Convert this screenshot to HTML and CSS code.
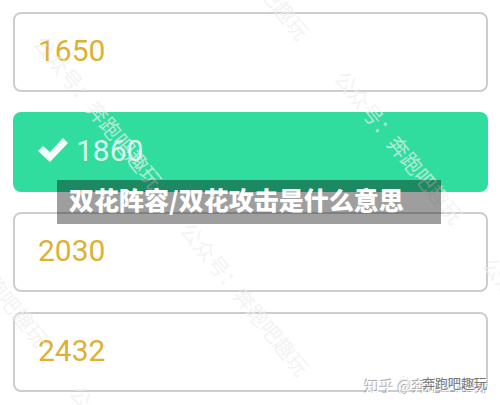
FILE: index.html
```
<!DOCTYPE html>
<html lang="zh-CN">
<head>
    <meta charset="UTF-8">
    <meta name="viewport" content="width=device-width, initial-scale=1.0">
    <title>双花阵容/双花攻击是什么意思</title>
    <link rel="stylesheet" href="styles.css">
</head>
<body>
    <main class="quiz">
        <div class="options">
            <button type="button" class="option">1650</button>
            <button type="button" class="option selected" aria-pressed="true">
                <svg class="check" viewBox="0 0 30 24" aria-hidden="true">
                    <path d="M0 13 L5 8 L12 14 L25 0 L30 5 L12 24 Z"/>
                </svg>
                1860
            </button>
            <button type="button" class="option">2030</button>
            <button type="button" class="option">2432</button>
        </div>

        <!-- repeated diagonal watermark -->
        <div class="marks" aria-hidden="true">
            <span class="mark mark-1">公众号：奔跑吧趣玩</span>
            <span class="mark mark-2">公众号：奔跑吧趣玩</span>
            <span class="mark mark-3">公众号：奔跑吧趣玩</span>
            <span class="mark mark-4">公众号：奔跑吧趣玩</span>
            <span class="mark mark-5">公众号：奔跑吧趣玩</span>
            <span class="mark mark-6">公众号：奔跑吧趣玩</span>
            <span class="mark mark-7">公众号：奔跑吧趣玩</span>
        </div>

        <h1 class="banner">双花阵容/双花攻击是什么意思</h1>

        <div class="credit credit-site">知乎 @奔跑吧趣玩</div>
        <div class="credit credit-account">
            <svg class="wechat" viewBox="0 0 24 18" aria-hidden="true">
                <circle cx="8" cy="7" r="6"/>
                <circle cx="16" cy="11" r="5"/>
                <path d="M5 5h2M10 5h2M14 10h1M18 10h1"/>
            </svg>
            奔跑吧趣玩
        </div>
    </main>
</body>
</html>
```
FILE: styles.css
```
body {
    margin: 0;
    background: #fff;
    font-family: Roboto, "Noto Sans CJK SC", sans-serif;
}

.quiz {
    position: relative;
    overflow: hidden;
    padding: 12px 12px 13px 13px;
}

.options {
    display: flex;
    flex-direction: column;
    gap: 20px;
}

.option {
    display: flex;
    align-items: center;
    gap: 8px;
    height: 80px;
    padding: 0 23px 4px;
    border: 2px solid #cdcdcd;
    border-radius: 8px;
    background: #fff;
    color: #dcb135;
    font-family: inherit;
    font-size: 30px;
    text-align: left;
    cursor: pointer;
}

.option.selected {
    background: #30dd9f;
    border-color: #30dd9f;
    color: #d8fbee;
}

.check {
    width: 30px;
    height: 24px;
    fill: #f4fffb;
}

.mark {
    position: absolute;
    color: rgba(238, 238, 238, 0.7);
    font-family: "Noto Sans CJK TC", "Noto Sans CJK SC", sans-serif;
    font-size: 21px;
    line-height: 24px;
    white-space: nowrap;
    transform: rotate(51deg);
    transform-origin: 0 50%;
    pointer-events: none;
}

.mark-1 {
    left: 39px;
    top: 26px;
}

.mark-2 {
    left: 340px;
    top: 61px;
}

.mark-3 {
    left: 186px;
    top: 213px;
}

.mark-4 {
    left: 186px;
    top: -123px;
}

.mark-5 {
    left: -75px;
    top: 184px;
}

.mark-6 {
    left: 75px;
    top: 376px;
}

.mark-7 {
    left: 488px;
    top: 248px;
}

.banner {
    position: absolute;
    left: 57px;
    right: 59px;
    top: 180px;
    margin: 0;
    padding: 0 12px 6px;
    background: rgba(0, 0, 0, 0.38);
    color: #fff;
    font-family: "Noto Sans CJK SC", sans-serif;
    font-size: 25px;
    font-weight: 900;
    line-height: 38px;
    white-space: nowrap;
}

.credit {
    position: absolute;
    right: 13px;
    white-space: nowrap;
    font-family: "Noto Sans CJK SC", sans-serif;
    line-height: 20px;
}

.credit-site {
    bottom: 9px;
    color: #fff;
    font-size: 15px;
    text-shadow: -1px -1px 1px #999;
}

.credit-account {
    display: flex;
    align-items: center;
    gap: 4px;
    bottom: 12px;
    color: #777;
    font-size: 13px;
    text-shadow: 1px 1px 0 #fff;
}

.wechat {
    width: 20px;
    height: 15px;
    fill: none;
    stroke: #ccc;
    stroke-width: 1;
    stroke-dasharray: 2 3;
}
```
